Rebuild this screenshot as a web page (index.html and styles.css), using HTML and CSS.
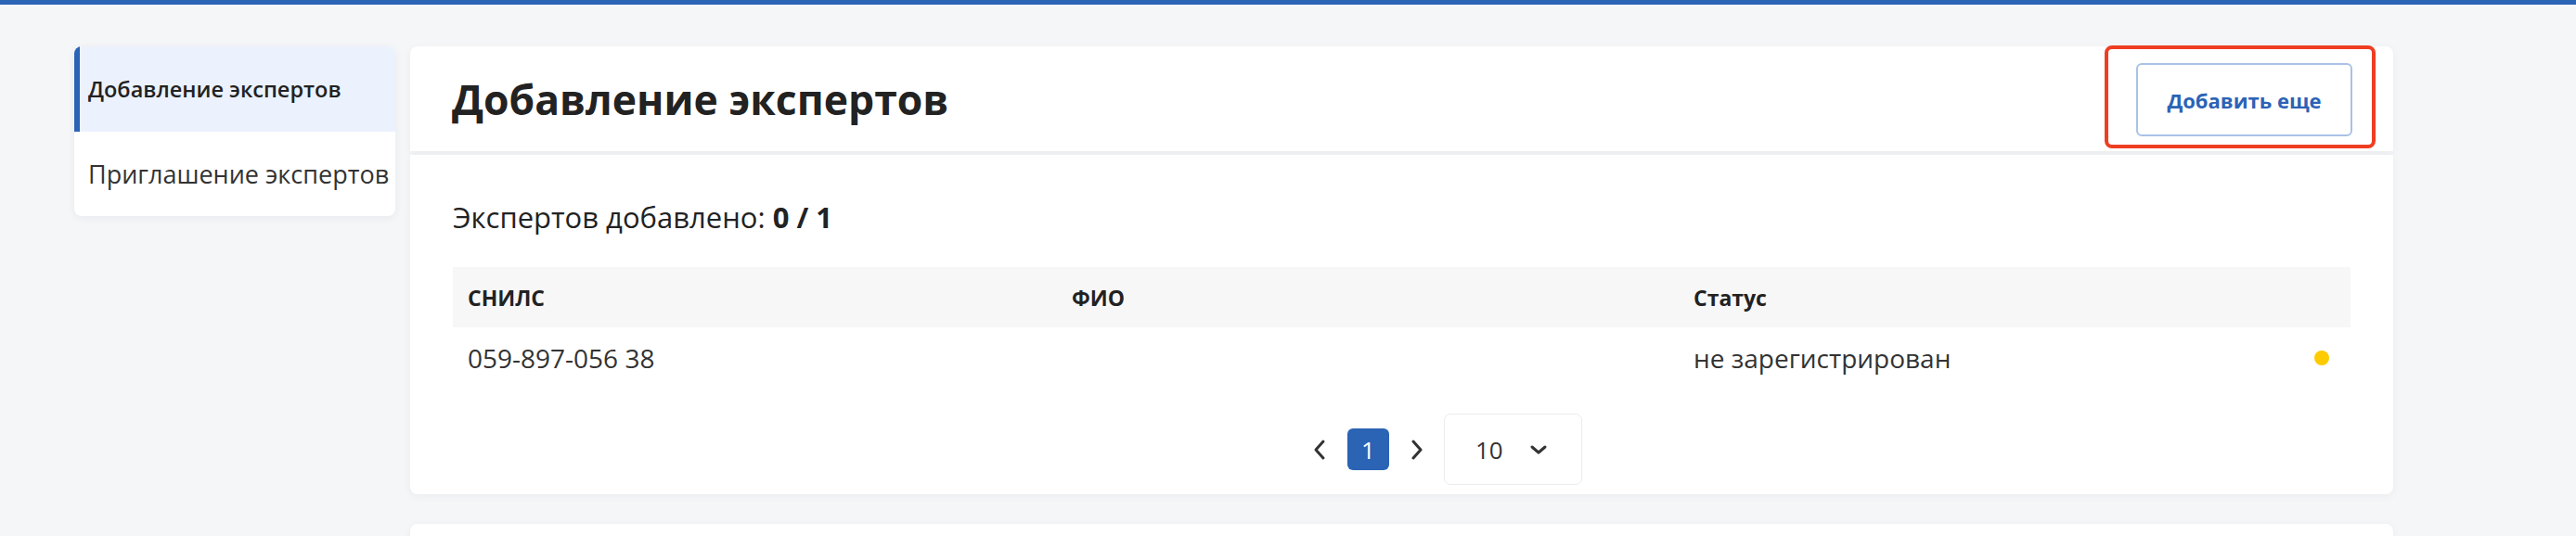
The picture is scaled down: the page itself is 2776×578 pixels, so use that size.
FILE: index.html
```html
<!DOCTYPE html>
<html lang="ru">
<head>
<meta charset="utf-8">
<title>Добавление экспертов</title>
<link rel="stylesheet" href="styles.css">
</head>
<body>
<div class="page">
  <nav class="sidebar">
    <div class="nav-item active">Добавление экспертов</div>
    <div class="nav-item">Приглашение экспертов</div>
  </nav>
  <main class="main">
    <header class="card header-card">
      <h1 class="title">Добавление экспертов</h1>
      <div class="btn-wrap">
        <button class="btn-outline">Добавить еще</button>
        <span class="highlight"></span>
      </div>
    </header>
    <section class="card content-card">
      <p class="summary">Экспертов добавлено: <b>0 / 1</b></p>
      <div class="table">
        <div class="thead">
          <div class="cell">СНИЛС</div>
          <div class="cell">ФИО</div>
          <div class="cell">Статус</div>
        </div>
        <div class="trow">
          <div class="cell">059-897-056 38</div>
          <div class="cell"></div>
          <div class="cell status">не зарегистрирован <span class="dot"></span></div>
        </div>
      </div>
      <div class="pagination">
        <span class="arrow">
          <svg width="14" height="24" viewBox="0 0 14 24"><polyline points="11,3 3,12 11,21" fill="none" stroke="#333" stroke-width="3" stroke-linecap="round" stroke-linejoin="round"/></svg>
        </span>
        <span class="page-num">1</span>
        <span class="arrow">
          <svg width="14" height="24" viewBox="0 0 14 24"><polyline points="3,3 11,12 3,21" fill="none" stroke="#333" stroke-width="3" stroke-linecap="round" stroke-linejoin="round"/></svg>
        </span>
        <div class="per-page">
          <span>10</span>
          <svg width="20" height="12" viewBox="0 0 20 12"><polyline points="3,3 10,9 17,3" fill="none" stroke="#333" stroke-width="3" stroke-linecap="round" stroke-linejoin="round"/></svg>
        </div>
      </div>
    </section>
    <section class="card next-card"></section>
  </main>
</div>
</body>
</html>
```
FILE: styles.css
```css
* { box-sizing: border-box; }
html, body { margin: 0; }
body {
  background: #f5f6f8;
  border-top: 5px solid #2b63b5;
  font-family: "Open Sans", "Noto Sans", sans-serif;
  color: #222;
  height: 578px;
  overflow: hidden;
}
.page {
  display: flex;
  gap: 16px;
  padding: 45px 0 0 80px;
}
.sidebar {
  flex: none;
  width: 346px;
  align-self: flex-start;
  background: #fff;
  border-radius: 8px;
  overflow: hidden;
  box-shadow: 0 2px 10px rgba(20, 30, 60, 0.06);
}
.nav-item {
  height: 91px;
  display: flex;
  align-items: center;
  padding-left: 15px;
  font-size: 27px;
  color: #333;
  white-space: nowrap;
}
.nav-item.active {
  height: 92px;
  background: #ebf2fd;
  border-left: 6px solid #2b63b5;
  padding-left: 9px;
  font-size: 23.5px;
  font-weight: 600;
  color: #222;
}
.main {
  width: 2137px;
  display: flex;
  flex-direction: column;
}
.card {
  background: #fff;
  border-radius: 8px;
  box-shadow: 0 2px 10px rgba(20, 30, 60, 0.05);
}
.header-card {
  height: 113px;
  display: flex;
  align-items: center;
  justify-content: space-between;
  padding: 0 44px 0 45px;
  border-radius: 8px 8px 0 0;
}
.title {
  margin: 0;
  font-size: 44.5px;
  font-weight: 700;
  color: #222;
}
.btn-wrap { position: relative; margin-top: 2px; }
.btn-outline {
  display: block;
  width: 233px;
  height: 79px;
  background: #fff;
  border: 2px solid #a9c2e6;
  border-radius: 6px;
  color: #2b63b5;
  font-family: inherit;
  font-size: 22px;
  font-weight: 700;
}
.highlight {
  position: absolute;
  left: -34px;
  right: -25px;
  top: -19px;
  bottom: -13px;
  border: 4px solid #ef3d22;
  border-radius: 8px;
  pointer-events: none;
}
.content-card {
  margin-top: 4px;
  height: 366px;
  padding: 48px 46px 0 46px;
  border-radius: 0 0 8px 8px;
}
.summary {
  margin: 0;
  font-size: 31px;
  line-height: 38px;
  color: #222;
}
.summary b { font-weight: 700; }
.table { margin-top: 35px; }
.thead, .trow {
  display: grid;
  grid-template-columns: 651px 670px 1fr;
  height: 65px;
  align-items: center;
}
.thead {
  background: #f7f7f7;
  font-size: 23px;
  font-weight: 700;
  color: #222;
}
.trow {
  font-size: 28px;
  color: #333;
}
.cell { padding-left: 16px; }
.status {
  display: flex;
  justify-content: space-between;
  align-items: center;
  padding-right: 23px;
}
.dot {
  width: 16px;
  height: 16px;
  border-radius: 50%;
  background: #fdcb00;
}
.pagination {
  margin-top: 28px;
  display: flex;
  align-items: center;
  justify-content: center;
  padding-left: 91px;
}
.arrow {
  width: 30px;
  display: flex;
  justify-content: center;
}
.page-num {
  width: 45px;
  height: 45px;
  margin: 0 15px;
  display: flex;
  align-items: center;
  justify-content: center;
  background: #2b63b5;
  border-radius: 6px;
  color: #fff;
  font-size: 26px;
}
.per-page {
  margin-left: 14px;
  width: 149px;
  height: 77px;
  border: 1px solid #ececec;
  border-radius: 7px;
  display: flex;
  align-items: center;
  padding-left: 33px;
  gap: 28px;
  font-size: 26px;
  color: #333;
}
.next-card {
  margin-top: 32px;
  height: 60px;
}
```
